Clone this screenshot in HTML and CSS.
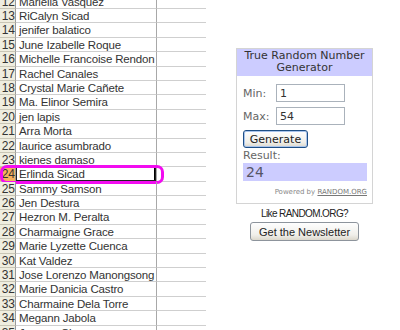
FILE: index.html
```html
<!DOCTYPE html>
<html lang="en">
<head>
  <meta charset="UTF-8">
  <title>Random pick</title>
  <link rel="stylesheet" href="styles.css">
</head>
<body>
  <div class="page">
    <!-- spreadsheet -->
    <div class="sheet">
      <div class="row"><div class="num">12</div><div class="cell">Mariella Vasquez</div><div class="cell blank"></div></div>
      <div class="row"><div class="num">13</div><div class="cell">RiCalyn Sicad</div><div class="cell blank"></div></div>
      <div class="row"><div class="num">14</div><div class="cell">jenifer balatico</div><div class="cell blank"></div></div>
      <div class="row"><div class="num">15</div><div class="cell">June Izabelle Roque</div><div class="cell blank"></div></div>
      <div class="row"><div class="num">16</div><div class="cell">Michelle Francoise Rendon</div><div class="cell blank"></div></div>
      <div class="row"><div class="num">17</div><div class="cell">Rachel Canales</div><div class="cell blank"></div></div>
      <div class="row"><div class="num">18</div><div class="cell">Crystal Marie Cañete</div><div class="cell blank"></div></div>
      <div class="row"><div class="num">19</div><div class="cell">Ma. Elinor Semira</div><div class="cell blank"></div></div>
      <div class="row"><div class="num">20</div><div class="cell">jen lapis</div><div class="cell blank"></div></div>
      <div class="row"><div class="num">21</div><div class="cell">Arra Morta</div><div class="cell blank"></div></div>
      <div class="row"><div class="num">22</div><div class="cell">laurice asumbrado</div><div class="cell blank"></div></div>
      <div class="row"><div class="num">23</div><div class="cell">kienes damaso</div><div class="cell blank"></div></div>
      <div class="row picked">
        <div class="num">24</div><div class="cell selected">Erlinda Sicad</div><div class="cell blank"></div>
        <span class="ring"></span>
      </div>
      <div class="row"><div class="num">25</div><div class="cell">Sammy Samson</div><div class="cell blank"></div></div>
      <div class="row"><div class="num">26</div><div class="cell">Jen Destura</div><div class="cell blank"></div></div>
      <div class="row"><div class="num">27</div><div class="cell">Hezron M. Peralta</div><div class="cell blank"></div></div>
      <div class="row"><div class="num">28</div><div class="cell">Charmaigne Grace</div><div class="cell blank"></div></div>
      <div class="row"><div class="num">29</div><div class="cell">Marie Lyzette Cuenca</div><div class="cell blank"></div></div>
      <div class="row"><div class="num">30</div><div class="cell">Kat Valdez</div><div class="cell blank"></div></div>
      <div class="row"><div class="num">31</div><div class="cell">Jose Lorenzo Manongsong</div><div class="cell blank"></div></div>
      <div class="row"><div class="num">32</div><div class="cell">Marie Danicia Castro</div><div class="cell blank"></div></div>
      <div class="row"><div class="num">33</div><div class="cell">Charmaine Dela Torre</div><div class="cell blank"></div></div>
      <div class="row"><div class="num">34</div><div class="cell">Megann Jabola</div><div class="cell blank"></div></div>
      <div class="row"><div class="num">35</div><div class="cell">Jasmyn Chua</div><div class="cell blank"></div></div>
    </div>

    <!-- random.org widget -->
    <div class="side">
      <div class="rng">
        <div class="rng-head">True Random Number<br>Generator</div>
        <div class="rng-body">
          <div class="field"><label for="min">Min:</label><input type="text" id="min" value="1"></div>
          <div class="field"><label for="max">Max:</label><input type="text" id="max" value="54"></div>
          <button class="btn gen">Generate</button>
          <div class="result-label">Result:</div>
          <div class="result">24</div>
          <div class="powered">Powered by <a href="#">RANDOM.ORG</a></div>
        </div>
      </div>
      <p class="like">Like RANDOM.ORG?</p>
      <button class="btn news">Get the Newsletter</button>
    </div>
  </div>
</body>
</html>
```

FILE: styles.css
```css
* {
  box-sizing: border-box;
}
body {
  margin: 0;
  background: #fff;
  font-family: "Liberation Sans", Arial, sans-serif;
}
.page {
  display: flex;
  align-items: flex-start;
  height: 330px;
  overflow: hidden;
}

/* sheet */
.sheet {
  width: 206px;
  margin-top: -5.4px;
}
.row {
  position: relative;
  display: grid;
  grid-template-columns: 16px 141px 49px;
  height: 14.4px;
}
.num {
  background: #efeddf;
  border-right: 1px solid #9a9a9a;
  border-bottom: 1px solid #c9c6b6;
  color: #333;
  font-size: 12px;
  line-height: 14px;
  text-align: right;
  overflow: hidden;
  white-space: nowrap;
  direction: rtl;
}
.cell {
  border-bottom: 1px solid #cfcfcf;
  border-right: 1px solid #a8a8a8;
  color: #333;
  font-size: 11.5px;
  letter-spacing: -0.15px;
  line-height: 14px;
  padding: 0 0 0 3px;
  white-space: nowrap;
  overflow: hidden;
}
.cell.blank {
  border-right: none;
}
.picked .num {
  background: #f6b25e;
}
.cell.selected {
  box-shadow: inset 0 0 0 1px #222, inset -2px 0 0 #000;
}
.ring {
  position: absolute;
  left: 0;
  top: -2.4px;
  width: 164px;
  height: 19px;
  border: 3px solid #f20cf0;
  border-radius: 7px;
}

/* widget */
.side {
  width: 137px;
  margin: 48px 0 0 30px;
  text-align: center;
}
.rng {
  border: 1px solid #d4d4d4;
  text-align: left;
  font-family: "DejaVu Sans", Verdana, sans-serif;
  font-size: 11px;
}
.rng-head {
  background: #ccccff;
  color: #333;
  text-align: center;
  line-height: 12px;
  padding: 1px 0 2px;
}
.rng-body {
  padding: 8px 5px 6px 6px;
}
.field {
  display: flex;
  align-items: center;
}
.field + .field {
  margin-top: 5px;
}
.field label {
  width: 33px;
  color: #666;
}
.field input {
  width: 69px;
  height: 18px;
  border: 1px solid #aab2bb;
  padding: 0 3px;
  font: 11px "DejaVu Sans", Verdana, sans-serif;
  color: #333;
}
.btn {
  display: block;
  border-radius: 3px;
  background: linear-gradient(#fefefe, #f0efea 70%, #dcd8cc);
  color: #222;
  padding: 0;
  cursor: pointer;
}
.gen {
  width: 65px;
  height: 18px;
  margin-top: 5px;
  border: 1px solid #1e4f86;
  box-shadow: inset 0 0 0 1px #a9c4ec;
  font: 11px "DejaVu Sans", Verdana, sans-serif;
}
.result-label {
  margin-top: 2px;
  line-height: 12px;
  color: #666;
}
.result {
  margin-top: 1px;
  height: 18px;
  background: #ccccff;
  color: #556;
  font-size: 14px;
  line-height: 18px;
  padding-left: 3px;
}
.powered {
  margin-top: 6px;
  text-align: right;
  font-size: 7px;
  line-height: 10px;
  color: #888;
}
.powered a {
  color: #777;
}
.like {
  margin: 4px 0 0;
  font-size: 10px;
  letter-spacing: -0.6px;
  line-height: 12px;
  color: #222;
}
.news {
  margin: 2px auto 0;
  width: 109px;
  height: 19px;
  border: 1px solid #8d949c;
  font: 11px "Liberation Sans", Arial, sans-serif;
}
```
